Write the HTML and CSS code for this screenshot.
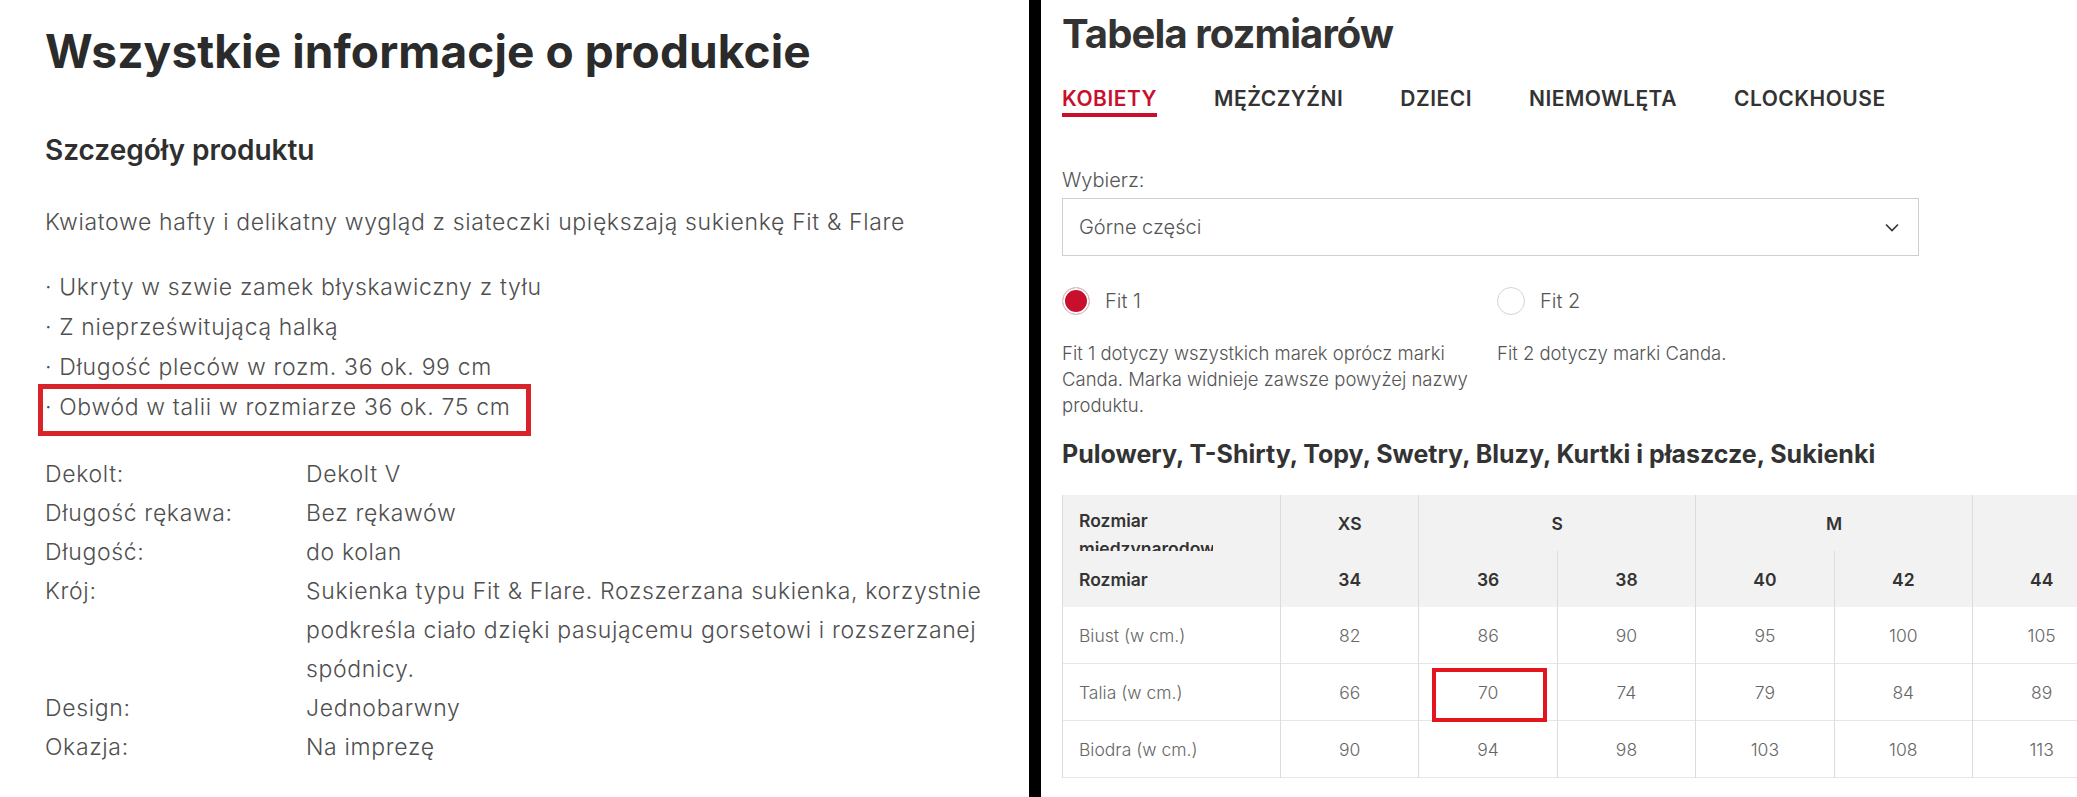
FILE: index.html
```html
<!DOCTYPE html>
<html lang="pl">
<head>
<meta charset="utf-8">
<title>Informacje o produkcie</title>
<link rel="stylesheet" href="styles.css">
</head>
<body>
<div class="page">
  <section class="info">
    <h1 class="info-title">Wszystkie informacje o produkcie</h1>
    <h2 class="info-sub">Szczegóły produktu</h2>
    <p class="info-lead">Kwiatowe hafty i delikatny wygląd z siateczki upiększają sukienkę Fit &amp; Flare</p>
    <ul class="bullets">
      <li>· Ukryty w szwie zamek błyskawiczny z tyłu</li>
      <li>· Z nieprześwitującą halką</li>
      <li>· Długość pleców w rozm. 36 ok. 99 cm</li>
      <li class="marked">· Obwód w talii w rozmiarze 36 ok. 75 cm</li>
    </ul>
    <dl class="specs">
      <dt>Dekolt:</dt><dd>Dekolt V</dd>
      <dt>Długość rękawa:</dt><dd>Bez rękawów</dd>
      <dt>Długość:</dt><dd>do kolan</dd>
      <dt>Krój:</dt><dd>Sukienka typu Fit &amp; Flare. Rozszerzana sukienka, korzystnie podkreśla ciało dzięki pasującemu gorsetowi i rozszerzanej spódnicy.</dd>
      <dt>Design:</dt><dd>Jednobarwny</dd>
      <dt>Okazja:</dt><dd>Na imprezę</dd>
    </dl>
  </section>
  <div class="divider"></div>
  <section class="sizes">
    <h1 class="sizes-title">Tabela rozmiarów</h1>
    <nav class="tabs">
      <span class="tab active">KOBIETY</span>
      <span class="tab">MĘŻCZYŹNI</span>
      <span class="tab">DZIECI</span>
      <span class="tab">NIEMOWLĘTA</span>
      <span class="tab">CLOCKHOUSE</span>
    </nav>
    <div class="field-label">Wybierz:</div>
    <div class="select">
      <span>Górne części</span>
      <svg class="chevron" width="14" height="9" viewBox="0 0 14 9"><path d="M1 1.5 L7 7.5 L13 1.5" fill="none" stroke="#333" stroke-width="1.6"/></svg>
    </div>
    <div class="fits">
      <div class="fit">
        <div class="fit-row"><span class="radio checked"></span><span>Fit 1</span></div>
        <p class="fit-desc">Fit 1 dotyczy wszystkich marek oprócz marki Canda. Marka widnieje zawsze powyżej nazwy produktu.</p>
      </div>
      <div class="fit">
        <div class="fit-row"><span class="radio"></span><span>Fit 2</span></div>
        <p class="fit-desc">Fit 2 dotyczy marki Canda.</p>
      </div>
    </div>
    <h2 class="table-title">Pulowery, T-Shirty, Topy, Swetry, Bluzy, Kurtki i płaszcze, Sukienki</h2>
    <table class="size-table">
      <colgroup>
        <col class="c-first">
        <col class="c-num"><col class="c-num"><col class="c-num"><col class="c-num"><col class="c-num"><col class="c-num"><col class="c-num">
      </colgroup>
      <thead>
        <tr class="h1row">
          <th class="label clip"><div class="clip-box">Rozmiar międzynarodowy</div></th>
          <th>XS</th>
          <th colspan="2">S</th>
          <th colspan="2">M</th>
          <th colspan="2">L</th>
        </tr>
        <tr class="h2row">
          <th class="label">Rozmiar</th>
          <th>34</th><th>36</th><th>38</th><th>40</th><th>42</th><th>44</th><th>46</th>
        </tr>
      </thead>
      <tbody>
        <tr>
          <td class="label">Biust (w cm.)</td>
          <td>82</td><td>86</td><td>90</td><td>95</td><td>100</td><td>105</td><td>110</td>
        </tr>
        <tr>
          <td class="label">Talia (w cm.)</td>
          <td>66</td><td class="marked">70</td><td>74</td><td>79</td><td>84</td><td>89</td><td>94</td>
        </tr>
        <tr>
          <td class="label">Biodra (w cm.)</td>
          <td>90</td><td>94</td><td>98</td><td>103</td><td>108</td><td>113</td><td>118</td>
        </tr>
      </tbody>
    </table>
  </section>
</div>
</body>
</html>
```
FILE: styles.css
```css
html, body {
  margin: 0;
  padding: 0;
  background: #fff;
}
body {
  width: 2077px;
  height: 797px;
  overflow: hidden;
  font-family: Inter, "Noto Sans", sans-serif;
}
.page {
  display: flex;
  height: 797px;
  overflow: hidden;
}
.info {
  flex: none;
  width: 1029px;
  box-sizing: border-box;
  padding: 23px 0 0 45px;
}
.divider {
  flex: none;
  width: 12px;
  background: #000;
}
.sizes {
  flex: 1;
  min-width: 0;
  overflow: hidden;
  padding: 10px 0 0 21px;
}

/* left panel */
.info-title {
  margin: 0;
  font-size: 46px;
  line-height: 56px;
  font-weight: 700;
  color: #2b2b2b;
  letter-spacing: 0.1px;
}
.info-sub {
  margin: 53px 0 0;
  font-size: 28px;
  line-height: 36px;
  font-weight: 600;
  color: #2f2f2f;
}
.info-lead {
  margin: 34px 0 0;
  font-size: 23px;
  line-height: 40px;
  font-weight: 300;
  letter-spacing: 0.65px;
  color: #4f4f4f;
}
.bullets {
  list-style: none;
  margin: 25px 0 0;
  padding: 0;
  font-size: 23px;
  line-height: 40px;
  font-weight: 300;
  letter-spacing: 0.65px;
  color: #4f4f4f;
}
.bullets li.marked {
  position: relative;
}
.bullets li.marked::after {
  content: "";
  position: absolute;
  left: -7px;
  top: -3px;
  width: 493px;
  height: 52px;
  box-sizing: border-box;
  border: 5px solid #d9232b;
}
.specs {
  display: grid;
  grid-template-columns: 261px 700px;
  margin: 28px 0 0;
  font-size: 23px;
  line-height: 39px;
  font-weight: 300;
  letter-spacing: 0.65px;
  color: #4f4f4f;
}
.specs dt, .specs dd {
  margin: 0;
}

/* right panel */
.sizes-title {
  margin: 0;
  font-size: 40px;
  line-height: 48px;
  font-weight: 700;
  color: #333;
  letter-spacing: -0.9px;
}
.tabs {
  display: flex;
  gap: 57px;
  margin-top: 29px;
}
.tab {
  font-size: 21px;
  line-height: 24px;
  font-weight: 600;
  letter-spacing: 0.5px;
  color: #333;
  padding-bottom: 2px;
  border-bottom: 4px solid transparent;
}
.tab.active {
  color: #c8102e;
  border-bottom-color: #c8102e;
}
.field-label {
  margin-top: 49px;
  font-size: 20px;
  line-height: 28px;
  font-weight: 300;
  color: #555;
}
.select {
  margin-top: 4px;
  width: 857px;
  height: 58px;
  box-sizing: border-box;
  border: 1px solid #cfcfcf;
  display: flex;
  align-items: center;
  justify-content: space-between;
  padding: 0 19px 0 16px;
  font-size: 20px;
  font-weight: 300;
  color: #555;
}
.fits {
  display: grid;
  grid-template-columns: 435px 435px;
  margin-top: 31px;
}
.fit-row {
  display: flex;
  align-items: center;
  gap: 15px;
  height: 28px;
  font-size: 20px;
  font-weight: 300;
  color: #555;
}
.radio {
  width: 28px;
  height: 28px;
  box-sizing: border-box;
  border-radius: 50%;
  border: 1px solid #d4d4d4;
  background: #fff;
}
.radio.checked {
  background: #c8102e;
  box-shadow: inset 0 0 0 2px #fff;
}
.fit-desc {
  margin: 25px 0 0;
  width: 410px;
  font-size: 18.5px;
  line-height: 26px;
  font-weight: 300;
  color: #555;
}
.table-title {
  margin: 20px 0 0;
  font-size: 25px;
  line-height: 32px;
  font-weight: 700;
  color: #333;
}
.size-table {
  margin-top: 25px;
  border-collapse: collapse;
  table-layout: fixed;
  width: 1187px;
  font-size: 17.5px;
  border-left: 1px solid #e8e8e8;
  border-bottom: 1px solid #e6e6e6;
}
.c-first { width: 218px; }
.c-num { width: 138.4px; }
.size-table th, .size-table td {
  height: 56px;
  padding: 0;
  text-align: center;
  border-left: 1px solid #dcdcdc;
}
.size-table thead th {
  background: #f2f2f2;
  font-weight: 600;
  color: #333;
}
.size-table tbody td {
  border-top: 1px solid #e6e6e6;
  font-weight: 300;
  color: #666;
}
.size-table tbody tr:first-child td {
  border-top: none;
}
.size-table .label {
  text-align: left;
  padding-left: 16px;
}
.size-table th.clip {
  padding: 0;
  vertical-align: top;
}
.clip-box {
  height: 56px;
  box-sizing: border-box;
  padding: 12px 16px 0;
  width: 150px;
  line-height: 28px;
  overflow: hidden;
}
.size-table td.marked {
  position: relative;
}
.size-table td.marked::after {
  content: "";
  position: absolute;
  left: 13px;
  top: 4px;
  width: 115px;
  height: 54px;
  box-sizing: border-box;
  border: 4px solid #e3161f;
}
```
